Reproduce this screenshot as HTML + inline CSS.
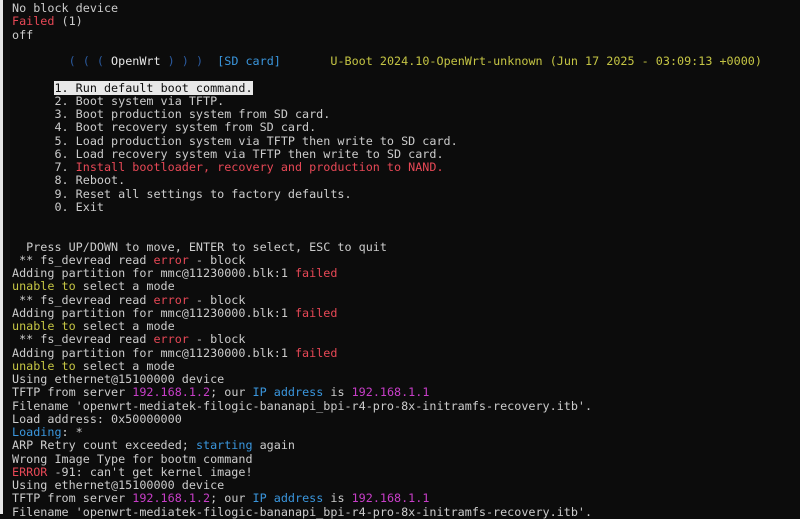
<!DOCTYPE html>
<html><head><meta charset="utf-8"><style>
html,body{margin:0;padding:0;}
body{width:800px;height:514px;overflow:hidden;background:#0c0c0c;position:relative;}
.strip{position:absolute;left:0;top:0;width:3px;height:514px;background:#e6e6e6;}
pre{position:absolute;left:12px;top:2px;margin:0;font-family:"DejaVu Sans Mono","Liberation Mono",monospace;font-size:11.75px;line-height:13.25px;color:#cccccc;white-space:pre;}
.r{color:#e74856}.y{color:#c5c544}.c{color:#3a96dd}.m{color:#c83ec8}.d{color:#2b5a9e}.w{color:#e8e8e8}
.sel{background:#e8e8e8;color:#0c0c0c}
</style></head><body><div class="strip"></div><pre>No block device
<span class="r">Failed</span> (1)
off

        <span class="d">( ( (</span> <span class="w">OpenWrt</span> <span class="d">) ) )</span>  <span class="c">[SD card]</span>       <span class="y">U-Boot 2024.10-OpenWrt-unknown (Jun 17 2025 - 03:09:13 +0000)</span>

      <span class="sel">1. Run default boot command.</span>
      2. Boot system via TFTP.
      3. Boot production system from SD card.
      4. Boot recovery system from SD card.
      5. Load production system via TFTP then write to SD card.
      6. Load recovery system via TFTP then write to SD card.
      7. <span class="r">Install bootloader, recovery and production to NAND.</span>
      8. Reboot.
      9. Reset all settings to factory defaults.
      0. Exit


  Press UP/DOWN to move, ENTER to select, ESC to quit
 ** fs_devread read <span class="r">error</span> - block
Adding partition for mmc@11230000.blk:1 <span class="r">failed</span>
<span class="y">unable to</span> select a mode
 ** fs_devread read <span class="r">error</span> - block
Adding partition for mmc@11230000.blk:1 <span class="r">failed</span>
<span class="y">unable to</span> select a mode
 ** fs_devread read <span class="r">error</span> - block
Adding partition for mmc@11230000.blk:1 <span class="r">failed</span>
<span class="y">unable to</span> select a mode
Using ethernet@15100000 device
TFTP from server <span class="m">192.168.1.2</span>; our <span class="c">IP address</span> is <span class="m">192.168.1.1</span>
Filename 'openwrt-mediatek-filogic-bananapi_bpi-r4-pro-8x-initramfs-recovery.itb'.
Load address: 0x50000000
<span class="c">Loading</span>: *
ARP Retry count exceeded; <span class="c">starting</span> again
Wrong Image Type for bootm command
<span class="r">ERROR</span> -91: can't get kernel image!
Using ethernet@15100000 device
TFTP from server <span class="m">192.168.1.2</span>; our <span class="c">IP address</span> is <span class="m">192.168.1.1</span>
Filename 'openwrt-mediatek-filogic-bananapi_bpi-r4-pro-8x-initramfs-recovery.itb'.
</pre></body></html>
